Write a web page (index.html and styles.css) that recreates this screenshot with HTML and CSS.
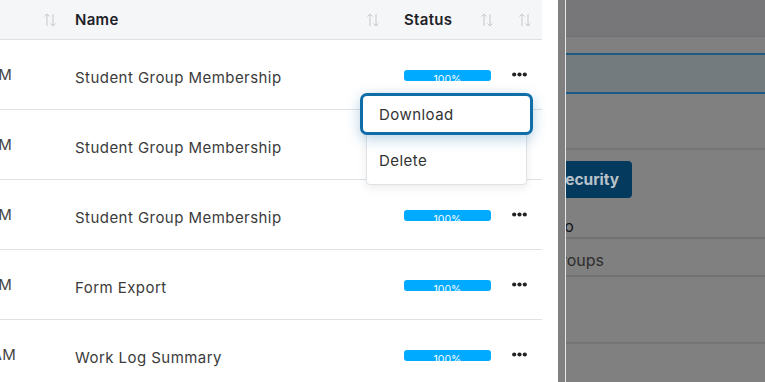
FILE: index.html
```html
<!DOCTYPE html>
<html lang="en">
<head>
  <meta charset="UTF-8" />
  <title>Exports</title>
  <link rel="stylesheet" href="styles.css">
</head>
<body>
  <div class="screen">
    <!-- Export drawer -->
    <div class="drawer">
      <div class="row head">
        <div class="cell col-date"></div>
        <div class="cell col-sort">
          <svg class="sort" width="12" height="14" viewBox="0 0 12 14"><path d="M3 13V1M0.5 3.5L3 1l2.5 2.5M9 1v12M6.5 10.5L9 13l2.5-2.5" fill="none" stroke="currentColor" stroke-width="1"/></svg>
        </div>
        <div class="cell col-name">Name</div>
        <div class="cell col-sort2">
          <svg class="sort" width="12" height="14" viewBox="0 0 12 14"><path d="M3 13V1M0.5 3.5L3 1l2.5 2.5M9 1v12M6.5 10.5L9 13l2.5-2.5" fill="none" stroke="currentColor" stroke-width="1"/></svg>
        </div>
        <div class="cell col-status">Status</div>
        <div class="cell col-sort3">
          <svg class="sort" width="12" height="14" viewBox="0 0 12 14"><path d="M3 13V1M0.5 3.5L3 1l2.5 2.5M9 1v12M6.5 10.5L9 13l2.5-2.5" fill="none" stroke="currentColor" stroke-width="1"/></svg>
        </div>
        <div class="cell col-act">
          <svg class="sort" width="12" height="14" viewBox="0 0 12 14"><path d="M3 13V1M0.5 3.5L3 1l2.5 2.5M9 1v12M6.5 10.5L9 13l2.5-2.5" fill="none" stroke="currentColor" stroke-width="1"/></svg>
        </div>
      </div>

      <div class="row">
        <div class="cell col-date"><span>04/14/2025 9:12 AM</span></div>
        <div class="cell col-sort"></div>
        <div class="cell col-name">Student Group Membership</div>
        <div class="cell col-sort2"></div>
        <div class="cell col-status"><div class="progress">100%</div></div>
        <div class="cell col-sort3"></div>
        <div class="cell col-act"><svg class="dots" width="15" height="5" viewBox="0 0 15 5"><circle cx="2.2" cy="2.5" r="2.1"/><circle cx="7.5" cy="2.5" r="2.1"/><circle cx="12.8" cy="2.5" r="2.1"/></svg></div>
      </div>

      <div class="row">
        <div class="cell col-date"><span>04/14/2025 9:05 AM</span></div>
        <div class="cell col-sort"></div>
        <div class="cell col-name">Student Group Membership</div>
        <div class="cell col-sort2"></div>
        <div class="cell col-status"><div class="progress">100%</div></div>
        <div class="cell col-sort3"></div>
        <div class="cell col-act"><svg class="dots" width="15" height="5" viewBox="0 0 15 5"><circle cx="2.2" cy="2.5" r="2.1"/><circle cx="7.5" cy="2.5" r="2.1"/><circle cx="12.8" cy="2.5" r="2.1"/></svg></div>
      </div>

      <div class="row">
        <div class="cell col-date"><span>04/11/2025 3:47 PM</span></div>
        <div class="cell col-sort"></div>
        <div class="cell col-name">Student Group Membership</div>
        <div class="cell col-sort2"></div>
        <div class="cell col-status"><div class="progress">100%</div></div>
        <div class="cell col-sort3"></div>
        <div class="cell col-act"><svg class="dots" width="15" height="5" viewBox="0 0 15 5"><circle cx="2.2" cy="2.5" r="2.1"/><circle cx="7.5" cy="2.5" r="2.1"/><circle cx="12.8" cy="2.5" r="2.1"/></svg></div>
      </div>

      <div class="row">
        <div class="cell col-date"><span>04/10/2025 1:20 PM</span></div>
        <div class="cell col-sort"></div>
        <div class="cell col-name">Form Export</div>
        <div class="cell col-sort2"></div>
        <div class="cell col-status"><div class="progress">100%</div></div>
        <div class="cell col-sort3"></div>
        <div class="cell col-act"><svg class="dots" width="15" height="5" viewBox="0 0 15 5"><circle cx="2.2" cy="2.5" r="2.1"/><circle cx="7.5" cy="2.5" r="2.1"/><circle cx="12.8" cy="2.5" r="2.1"/></svg></div>
      </div>

      <div class="row">
        <div class="cell col-date wide"><span>04/09/2025 10:58 AM</span></div>
        <div class="cell col-sort"></div>
        <div class="cell col-name">Work Log Summary</div>
        <div class="cell col-sort2"></div>
        <div class="cell col-status"><div class="progress">100%</div></div>
        <div class="cell col-sort3"></div>
        <div class="cell col-act"><svg class="dots" width="15" height="5" viewBox="0 0 15 5"><circle cx="2.2" cy="2.5" r="2.1"/><circle cx="7.5" cy="2.5" r="2.1"/><circle cx="12.8" cy="2.5" r="2.1"/></svg></div>
      </div>

      <!-- Row action menu -->
      <div class="menu">
        <div class="menu-item focused">Download</div>
        <div class="menu-item">Delete</div>
      </div>
    </div>

    <div class="gutter"></div>

    <!-- Page behind, dimmed by the backdrop -->
    <div class="behind">
      <div class="behind-top"></div>
      <div class="behind-gap"></div>
      <div class="behind-tab"></div>
      <div class="behind-block"></div>
      <div class="behind-btn-row"><span class="btn">Security</span></div>
      <div class="behind-line dark">Info</div>
      <div class="behind-line">Groups</div>
      <div class="behind-empty"></div>
    </div>
  </div>
</body>
</html>
```

FILE: styles.css
```css
body {
  margin: 0;
  font-family: 'Inter', 'Noto Sans', sans-serif;
  color: #333;
  overflow: hidden;
}

.screen {
  display: flex;
  height: 382px;
  background-color: #808080;
}

.drawer {
  position: relative;
  width: 558px;
  flex-shrink: 0;
  background-color: #fff;
}

.row {
  display: flex;
  align-items: center;
  height: 69px;
  border-bottom: 1px solid #dde2e6;
  margin-right: 16px;
  font-size: 15px;
  letter-spacing: 0.45px;
}

.row.head {
  height: 39px;
  background-color: #f5f6f8;
  font-weight: 600;
  color: #1f2328;
  letter-spacing: 0.3px;
}

.cell {
  flex-shrink: 0;
  white-space: nowrap;
}

.col-date {
  width: 12px;
  display: flex;
  justify-content: flex-end;
  overflow: hidden;
  color: #444;
  letter-spacing: 0.3px;
}

.col-date.wide {
  width: 16px;
}

.col-date.wide + .col-sort {
  width: 59px;
}

.col-sort {
  width: 63px;
  padding-left: 32px;
  box-sizing: border-box;
}

.col-name {
  width: 296px;
  color: #3b3b3b;
  padding-top: 5px;
}

.head .col-name {
  color: #1f2328;
  padding-top: 0;
}

.col-sort2 {
  width: 33px;
}

.col-status {
  width: 87px;
}

.col-sort3 {
  width: 29px;
}

.col-act {
  width: 24px;
}

.sort {
  display: block;
  color: #c5cace;
  margin-top: 1px;
}

.col-sort2 .sort {
  margin-left: -4px;
}

.col-sort3 .sort {
  margin-left: -10px;
}

.col-act .sort {
  margin-left: -1px;
}

.progress {
  height: 11px;
  margin-top: 1px;
  border-radius: 3px;
  background-color: #00aaff;
  color: #fff;
  font-size: 10.5px;
  line-height: 19px;
  text-align: center;
  letter-spacing: 0;
  overflow: hidden;
}

.dots {
  display: block;
  margin-left: -8px;
  margin-top: 0;
  fill: #222;
}

.menu {
  position: absolute;
  left: 366px;
  top: 93px;
  width: 159px;
  border: 1px solid #dfe3e8;
  border-radius: 4px;
  background-color: #fff;
  box-shadow: 0 3px 10px rgba(0, 0, 0, 0.08);
  font-size: 15px;
  letter-spacing: 0.45px;
  color: #333;
}

.menu-item {
  height: 49px;
  line-height: 51px;
  padding-left: 12px;
}

.menu-item.focused {
  height: 36px;
  line-height: 38px;
  margin: -1px -7px 0;
  padding-left: 16px;
  border: 3px solid #0f6da8;
  border-radius: 7px;
  background-color: #fff;
  box-shadow: 0 4px 14px rgba(15, 109, 168, 0.3);
}

.gutter {
  width: 7px;
  flex-shrink: 0;
  border-right: 1px solid #e4e6e8;
}

.behind {
  flex: 1;
  overflow: hidden;
  background-color: #808080;
}

.behind-top {
  height: 36px;
  background-color: #77777a;
  border-bottom: 1px solid #6d6f70;
}

.behind-gap {
  height: 16px;
}

.behind-tab {
  height: 37px;
  background-color: #737b7e;
  border-top: 2px solid #1b5b85;
  border-bottom: 2px solid #1b5b85;
}

.behind-block {
  height: 54px;
  border-bottom: 2px solid #767676;
}

.behind-btn-row {
  padding-top: 11px;
  height: 51px;
  box-sizing: border-box;
}

.btn {
  display: inline-block;
  margin-left: -25px;
  height: 37px;
  line-height: 37px;
  padding: 0 13px 0 14px;
  border-radius: 4px;
  background-color: #053a5f;
  color: #b8c2ca;
  font-weight: 700;
  font-size: 15.5px;
  letter-spacing: 0;
}

.behind-line {
  height: 25px;
  padding-top: 11px;
  line-height: 20px;
  margin-left: -17px;
  border-bottom: 2px solid #727272;
  font-size: 16px;
  color: #2e2e2e;
}

.behind-line.dark {
  height: 21px;
  padding-top: 15px;
  margin-left: -21px;
  color: #151515;
}

.behind-empty {
  height: 65px;
  border-bottom: 2px solid #757575;
}
```
